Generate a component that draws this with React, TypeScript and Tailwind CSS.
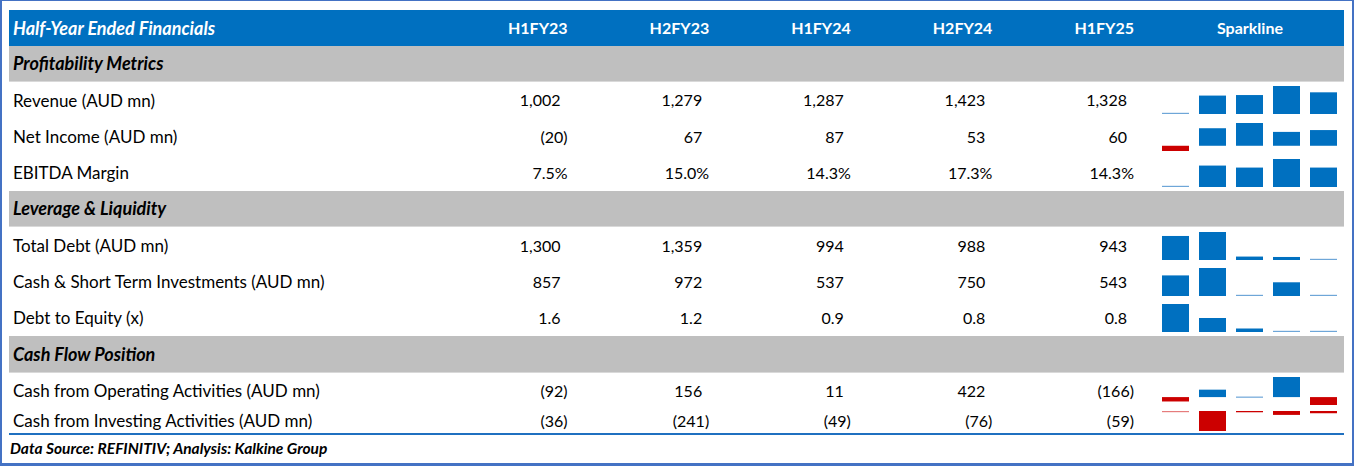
import React from "react";

type Row =
  | { kind: "section"; label: string }
  | { kind: "data"; label: string; values: number[]; fmt: "int" | "pct" | "dec"; short?: boolean };

const rows: Row[] = [
  { kind: "section", label: "Profitability Metrics" },
  { kind: "data", label: "Revenue (AUD mn)", values: [1002, 1279, 1287, 1423, 1328], fmt: "int" },
  { kind: "data", label: "Net Income (AUD mn)", values: [-20, 67, 87, 53, 60], fmt: "int" },
  { kind: "data", label: "EBITDA Margin", values: [7.5, 15.0, 14.3, 17.3, 14.3], fmt: "pct" },
  { kind: "section", label: "Leverage & Liquidity" },
  { kind: "data", label: "Total Debt (AUD mn)", values: [1300, 1359, 994, 988, 943], fmt: "int" },
  { kind: "data", label: "Cash & Short Term Investments (AUD mn)", values: [857, 972, 537, 750, 543], fmt: "int" },
  { kind: "data", label: "Debt to Equity (x)", values: [1.6, 1.2, 0.9, 0.8, 0.8], fmt: "dec" },
  { kind: "section", label: "Cash Flow Position" },
  { kind: "data", label: "Cash from Operating Activities (AUD mn)", values: [-92, 156, 11, 422, -166], fmt: "int" },
  { kind: "data", label: "Cash from Investing Activities (AUD mn)", values: [-36, -241, -49, -76, -59], fmt: "int", short: true },
];

const headers = ["H1FY23", "H2FY23", "H1FY24", "H2FY24", "H1FY25"];

function Value({ v, fmt }: { v: number; fmt: "int" | "pct" | "dec" }) {
  if (fmt === "pct") return <span>{v.toFixed(1)}%</span>;
  const abs = Math.abs(v);
  const s = fmt === "int" ? abs.toLocaleString("en-US") : abs.toFixed(1);
  if (v < 0) return <span>({s})</span>;
  return (
    <span>
      {s}
      <span className="inline-block w-[7px]" />
    </span>
  );
}

function Sparkline({ values, h }: { values: number[]; h: number }) {
  const lo = Math.min(...values);
  const hi = Math.max(...values);
  let base = 0;
  if (lo >= 0) base = lo;
  else if (hi <= 0) base = hi;
  const scale = h / (hi - lo || 1);
  const bw = 27;
  const gap = 10;
  return (
    <svg width={5 * bw + 4 * gap} height={h} className="block">
      {values.map((v, i) => {
        const top = Math.max(v, base);
        const bottom = Math.min(v, base);
        let y = (hi - top) * scale;
        let height = (top - bottom) * scale;
        const neg = v < 0;
        let fill = neg ? "#cc0000" : "#0070c0";
        if (height < 1) {
          fill = neg ? "#e67c7c" : "#6ea6d8";
          height = 1.2;
          if (base === lo) y = h - 1.2;
        }
        return <rect key={i} x={i * (bw + gap)} y={y} width={bw} height={height} fill={fill} />;
      })}
    </svg>
  );
}

export default function App() {
  return (
    <div
      className="w-[1354px] h-[466px] bg-white border-[#4472c4] border-t border-l-2 border-r-2 border-b-[3px] pl-[7px] pr-[8px] pt-[9px] text-black"
      style={{ fontFamily: "Lato, 'Open Sans', sans-serif" }}
    >
      <div className="flex flex-col">
        {/* header */}
        <div className="flex h-[36px] items-center bg-[#0070c0] text-white font-bold text-[16px]">
          <div className="w-[421px] pl-[4px] italic text-[18px]">Half-Year Ended Financials</div>
          {headers.map((h) => (
            <div key={h} className="w-[141.6px] text-right pr-[4px]">
              {h}
            </div>
          ))}
          <div className="flex-1 text-center pl-[18px]">Sparkline</div>
        </div>
        {rows.map((r, idx) =>
          r.kind === "section" ? (
            <div
              key={idx}
              className="flex h-[36.3px] items-center bg-[#bfbfbf] border-b border-[#d9d9d9] font-bold italic text-[18px] pl-[4px]"
            >
              {r.label}
            </div>
          ) : (
            <div key={idx} className={`flex items-center text-[16px] ${r.short ? "h-[24px]" : "h-[36.3px]"}`}>
              <div className="w-[421px] pl-[4px] whitespace-nowrap text-[17px]">{r.label}</div>
              {r.values.map((v, i) => (
                <div key={i} className="w-[141.6px] text-right pr-[4px] whitespace-nowrap">
                  <Value v={v} fmt={r.fmt} />
                </div>
              ))}
              <div className="flex-1 pl-[24px]">
                <Sparkline values={r.values} h={r.short ? 20 : 28} />
              </div>
            </div>
          )
        )}
        <div className="h-[2px] bg-[#1f70c0]" />
        <div className="h-[28px] flex items-center pl-[1px] font-bold italic text-[15.5px]">
          Data Source: REFINITIV; Analysis: Kalkine Group
        </div>
      </div>
    </div>
  );
}
